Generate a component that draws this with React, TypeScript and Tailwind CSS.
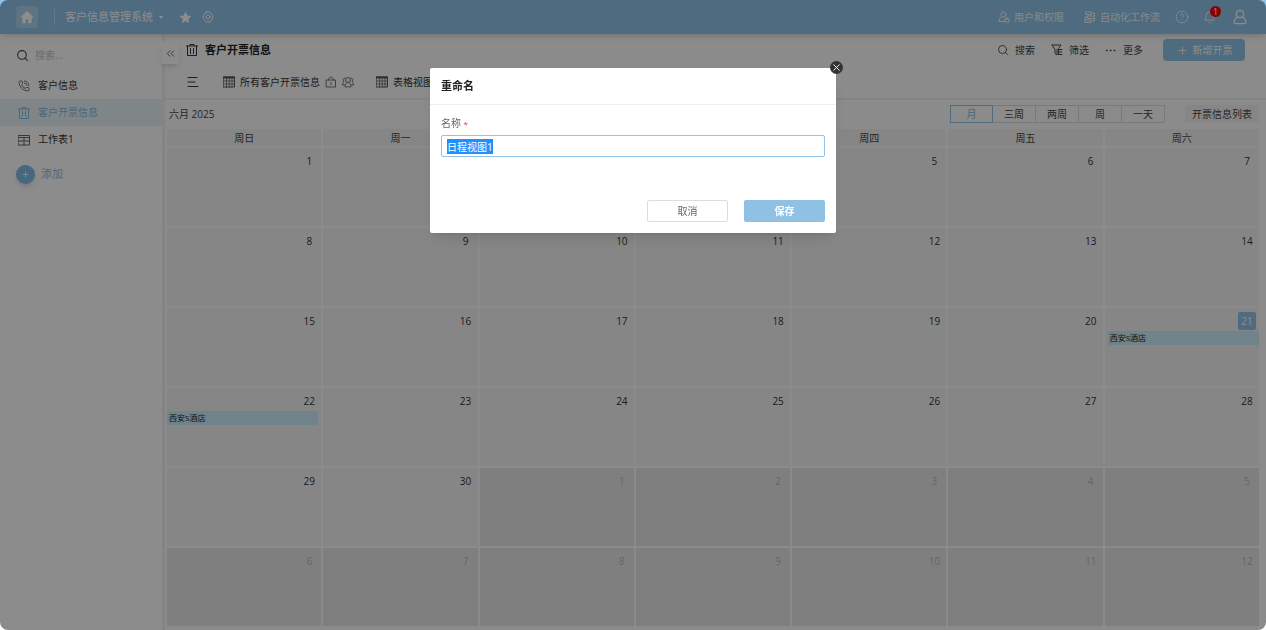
import { useEffect, useRef } from "react";
import type { ReactNode } from "react";
import clsx from "clsx";
import {
  Bell,
  ChevronsLeft,
  CircleHelp,
  Ellipsis,
  PhoneCall,
  Plus,
  Search,
  X,
} from "lucide-react";

const weekdays = ["周日", "周一", "周二", "周三", "周四", "周五", "周六"];
const ranges = ["月", "三周", "两周", "周", "一天"];

type Day = { day: number; outside: boolean };

// June 2025 starts on a Sunday, so the grid runs on into July
const days: Day[] = Array.from({ length: 42 }, (_, i) =>
  i < 30 ? { day: i + 1, outside: false } : { day: i - 29, outside: true },
);
const weeks = Array.from({ length: 6 }, (_, i) => days.slice(i * 7, i * 7 + 7));

function Icon({
  size = 12,
  className,
  children,
}: {
  size?: number;
  className?: string;
  children: ReactNode;
}) {
  return (
    <svg
      width={size}
      height={size}
      viewBox="0 0 24 24"
      fill="none"
      stroke="currentColor"
      strokeWidth="2"
      strokeLinecap="round"
      strokeLinejoin="round"
      className={clsx("shrink-0", className)}
      aria-hidden="true"
    >
      {children}
    </svg>
  );
}

function BinIcon({ size, className }: { size?: number; className?: string }) {
  return (
    <Icon size={size} className={className}>
      <path d="M1 4h22M8 3V1h8v2M3 4v19h18V4M9 9v10M15 9v10" />
    </Icon>
  );
}

function GridIcon({ className }: { className?: string }) {
  return (
    <Icon className={className}>
      <path d="M1 2h22v20H1z" />
      <path d="M1 3h22" strokeWidth="4" />
      <path d="M1 10h22M1 16h22M7 4v18M12.500 4v18M18 4v18" strokeWidth="1.500" />
    </Icon>
  );
}

function TopBar() {
  return (
    <header className="relative z-10 flex h-[34px] items-center bg-[#8fc4e8] pr-[18px] pl-4 text-white shadow-md">
      <button
        aria-label="首页"
        className="flex size-[22px] items-center justify-center rounded bg-white/25"
      >
        <svg width="14" height="14" viewBox="0 0 24 24" fill="currentColor">
          <path d="M12 1.500 1.500 11.500c-.6.6-.3 1.500.6 1.500H4v8c0 .8.600 1.500 1.500 1.500H10V16h4v6.500h4.500c.9 0 1.500-.7 1.500-1.500v-8h1.900c.9 0 1.200-.9.600-1.500z" />
        </svg>
      </button>
      <span className="ml-4 h-4 w-px bg-white/40" />
      <button className="ml-2.5 flex items-center gap-1.5 text-[11px]">
        客户信息管理系统
        <svg width="4" height="3" viewBox="0 0 4 3" fill="currentColor">
          <path d="M0 0h4L2 3z" />
        </svg>
      </button>
      <button aria-label="收藏" className="ml-4">
        <svg width="13" height="13" viewBox="0 0 24 24" fill="currentColor">
          <path d="m12 1 3.300 7.200 7.700 1-5.700 5.400 1.500 7.900L12 18.600l-6.800 3.900 1.500-7.900L1 9.200l7.700-1z" />
        </svg>
      </button>
      <button aria-label="设置" className="ml-2.5">
        <Icon>
          <path d="M8 2h8c1 0 6 9 6 10s-5 10-6 10H8c-1 0-6-9-6-10S7 2 8 2z" />
          <circle cx="12" cy="12" r="4" />
        </Icon>
      </button>

      <nav className="ml-auto flex items-center text-[10px]">
        <a href="#users" className="flex items-center gap-1 text-white/90">
          <Icon>
            <circle cx="11" cy="7" r="5" />
            <path d="M8 12c-4 1-6 4-6 9h9M14 16h8v6h-8zM16 16v-2h4v2" />
          </Icon>
          用户和权限
        </a>
        <a href="#workflow" className="ml-5 flex items-center gap-1 text-white/90">
          <Icon>
            <path d="M4 2h11v5H4zM8 10h12v5H8zM3 18h11v5H3zM18 4h3v6M5 12H2v6M21 15v5h-4" />
          </Icon>
          自动化工作流
        </a>
        <button aria-label="帮助" className="ml-[15px] text-white/90">
          <CircleHelp size={14} strokeWidth={1.5} />
        </button>
        <button aria-label="通知" className="relative ml-3.5">
          <Bell size={13} strokeWidth={1.75} className="text-white/90" />
          <span className="absolute -top-[5px] left-[7px] flex size-[11px] items-center justify-center rounded-full bg-[#ff0000] text-[9px] leading-none">
            1
          </span>
        </button>
        <button aria-label="账户" className="ml-4">
          <Icon size={16}>
            <circle cx="12" cy="7.500" r="5.500" />
            <path d="M8 12c-3 2-5 5-5 8 0 1 1 2 2 2h14c1 0 2-1 2-2 0-3-2-6-5-8" />
          </Icon>
        </button>
      </nav>
    </header>
  );
}

function Sidebar() {
  const item = "flex h-[27px] items-center gap-2 pl-[18px]";
  return (
    <aside className="w-[162px] shrink-0 pt-2 text-[10px] text-[#333]">
      <label className="flex h-[30px] items-center gap-1.5 pb-1 pl-4">
        <Search size={13} strokeWidth={2} className="shrink-0 text-[#444]" />
        <input
          type="search"
          aria-label="搜索"
          placeholder="搜索..."
          className="w-28 bg-transparent outline-none placeholder:text-[#c4c4c4]"
        />
      </label>
      <nav>
        <a href="#customers" className={item}>
          <PhoneCall size={12} strokeWidth={1.75} className="text-[#666]" />
          客户信息
        </a>
        <a href="#invoices" className={clsx(item, "bg-[#e9f4f8] text-[#7fbde6]")}>
          <BinIcon />
          客户开票信息
        </a>
        <a href="#sheet" className={item}>
          <Icon className="text-[#666]">
            <path d="M1 3h22v19H1zM1 7h22M1 14h22M12 7v15" />
          </Icon>
          工作表1
        </a>
      </nav>
      <button className="mt-3 ml-4 flex items-center gap-1.5 text-[11px] text-[#7fbde6]">
        <span className="flex size-[19px] items-center justify-center rounded-full bg-[#7fbde6] text-white shadow-md">
          <Plus size={9} />
        </span>
        添加
      </button>
    </aside>
  );
}

function PageHeader() {
  return (
    <div className="border-b-2 border-[#f0f0f0]">
      <div className="flex h-8 items-center pr-[21px] pl-[21px]">
        <BinIcon className="text-[#333]" />
        <h1 className="ml-[7px] text-[11px] font-bold text-[#222]">客户开票信息</h1>
        <div className="ml-auto flex items-center text-[10px] text-[#444]">
          <button className="flex items-center gap-1.5">
            <Search size={12} strokeWidth={1.75} />
            搜索
          </button>
          <button className="ml-4 flex items-center gap-1.5">
            <Icon>
              <path d="M2 2h18l-5 7M2 2l6 9v8l4 3V11M15 11h7M15 16h6M15 21h7M15 11v10" />
            </Icon>
            筛选
          </button>
          <button className="ml-[15px] flex items-center gap-1.5">
            <Ellipsis size={13} strokeWidth={1.5} />
            更多
          </button>
          <button className="ml-5 flex h-[22px] w-[82px] items-center justify-center gap-1 rounded-sm bg-[#8fc4e8] text-white">
            <Plus size={13} strokeWidth={1.5} />
            新增开票
          </button>
        </div>
      </div>
      <div className="flex h-8 items-center pl-[22px] text-[10px] text-[#333]">
        <button aria-label="视图列表">
          <Icon>
            <path d="M2 3h18M2 12h14M2 21h20" />
          </Icon>
        </button>
        <button className="ml-6 flex items-center gap-[5px]">
          <GridIcon className="text-[#555]" />
          所有客户开票信息
          <Icon className="text-[#777]">
            <path d="M3 8h18v14H3zM7 8c0-8 10-8 10 0M12 13v4" />
          </Icon>
          <Icon className="text-[#777]">
            <circle cx="12" cy="8" r="5" />
            <path d="M6 21c0-5 2-8 6-8s6 3 6 8zM6 4C2 4 1 9 4 12c-2 1-3 3-3 6h4M18 4c4 0 5 5 2 8 2 1 3 3 3 6h-4" />
          </Icon>
        </button>
        <button className="ml-[22px] flex items-center gap-[5px]">
          <GridIcon className="text-[#555]" />
          表格视图
        </button>
      </div>
    </div>
  );
}

function EventBar({ className }: { className?: string }) {
  return (
    <a
      href="#event"
      className={clsx(
        "mt-px block h-3.5 bg-[#cdeefb] px-0.5 text-[8px] leading-[14px] text-[#222]",
        className,
      )}
    >
      西安S酒店
    </a>
  );
}

function DayCell({ day, outside }: Day) {
  const today = !outside && day === 21;
  return (
    <td
      className={clsx(
        "h-[78px] p-0 align-top",
        outside ? "bg-[#e8e8e8] text-[#bbb]" : "bg-[#f5f5f5] text-[#333]",
      )}
    >
      <div
        className={clsx(
          "mt-1 mr-[3px] ml-auto flex size-[18px] items-center justify-center rounded-xs",
          today && "bg-[#8fc4e8] text-white",
        )}
      >
        {day}
      </div>
      {today && <EventBar className="ml-[3px]" />}
      {!outside && day === 22 && <EventBar className="mr-[3px] rounded-r-xs" />}
    </td>
  );
}

function Calendar() {
  return (
    <section className="text-[10px] text-[#444]">
      <div className="flex h-[27px] items-center pt-px pr-[7px] pl-1">
        <h2>六月 2025</h2>
        <div className="ml-auto flex">
          {ranges.map((range, i) => (
            <button
              key={range}
              className={clsx(
                "h-[18px] w-[43px] border",
                i === 0
                  ? "border-[#8fc4e8] text-[#7fbde6]"
                  : "border-l-0 border-[#ddd]",
              )}
            >
              {range}
            </button>
          ))}
        </div>
        <button className="ml-5 h-[18px] w-[74px] rounded-xs bg-[#f5f5f5]">
          开票信息列表
        </button>
      </div>
      <div className="pr-[5px]">
        <table className="w-full table-fixed border-separate border-spacing-[2px]">
          <thead>
            <tr>
              {weekdays.map((name) => (
                <th
                  key={name}
                  scope="col"
                  className="h-[17px] bg-[#f5f5f5] p-0 font-normal leading-4"
                >
                  {name}
                </th>
              ))}
            </tr>
          </thead>
          <tbody>
            {weeks.map((week, i) => (
              <tr key={i}>
                {week.map((d) => (
                  <DayCell key={d.day} {...d} />
                ))}
              </tr>
            ))}
          </tbody>
        </table>
      </div>
    </section>
  );
}

function RenameDialog() {
  const inputRef = useRef<HTMLInputElement>(null);

  useEffect(() => {
    inputRef.current?.focus();
    inputRef.current?.select();
  }, []);

  return (
    <div className="fixed inset-0 z-20 flex items-start justify-center rounded-lg bg-black/45 pt-[68px]">
      <form
        role="dialog"
        aria-modal="true"
        aria-labelledby="rename-title"
        onSubmit={(e) => e.preventDefault()}
        className="relative w-[406px] rounded-xs bg-white text-[10px] text-[#666] shadow-lg"
      >
        <button
          type="button"
          aria-label="关闭"
          className="absolute -top-[7px] -right-[7px] flex size-[13px] items-center justify-center rounded-full bg-[#333] text-white"
        >
          <X size={11} strokeWidth={2} />
        </button>
        <h2
          id="rename-title"
          className="flex h-[37px] items-center border-b border-[#eee] px-[11px] text-[11px] font-bold text-[#222]"
        >
          重命名
        </h2>
        <div className="px-[11px] pt-2.5 pb-[11px]">
          <label htmlFor="view-name" className="block h-5 leading-4">
            名称 <span className="text-[8px] text-[#f5222d]">*</span>
          </label>
          <input
            id="view-name"
            ref={inputRef}
            defaultValue="日程视图1"
            className="block h-[22px] w-full rounded-xs border border-[#8fc4e8] px-[5px] leading-[14px] text-[#333] outline-none selection:bg-[#1e90ff] selection:text-white"
          />
          <div className="mt-[43px] flex justify-end gap-4">
            <button
              type="button"
              className="h-[22px] w-[81px] rounded-xs border border-[#ddd]"
            >
              取消
            </button>
            <button
              type="submit"
              className="h-[22px] w-[81px] rounded-xs bg-[#8fc1e5] font-bold text-white"
            >
              保存
            </button>
          </div>
        </div>
      </form>
    </div>
  );
}

export default function App() {
  return (
    <div className="flex min-h-screen flex-col bg-white font-['Open_Sans','Noto_Sans_CJK_SC',sans-serif]">
      <TopBar />
      <div className="flex flex-1">
        <Sidebar />
        <main className="relative min-w-0 flex-1 border-l-[3px] border-[#f0f0f0] bg-[#fdfdfd]">
          <button
            aria-label="收起侧栏"
            className="absolute top-2 -left-[3px] flex h-[22px] w-[17px] items-center justify-center rounded-r-xs bg-white text-[#666] shadow-md"
          >
            <ChevronsLeft size={13} strokeWidth={1.75} />
          </button>
          <PageHeader />
          <Calendar />
        </main>
      </div>
      <RenameDialog />
    </div>
  );
}
